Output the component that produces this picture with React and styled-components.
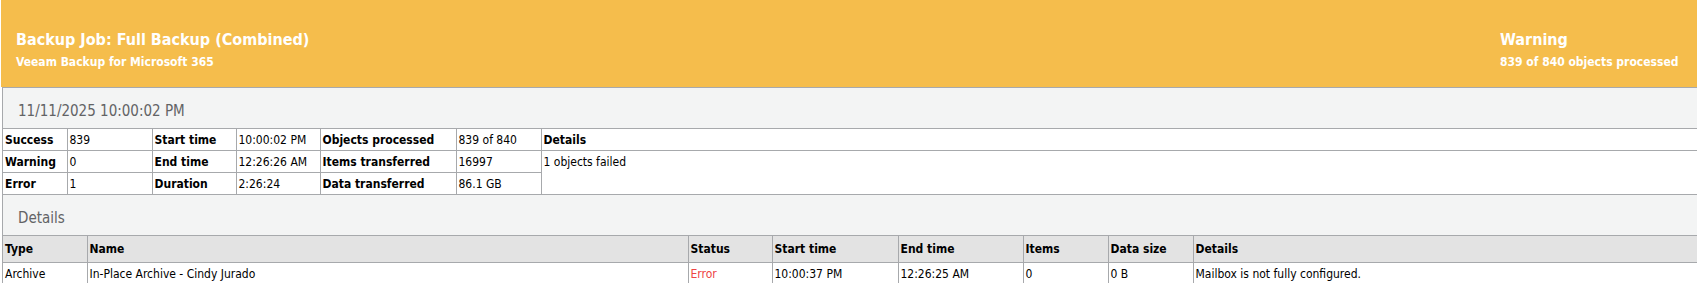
import React from "react";
import styled, { createGlobalStyle } from "styled-components";

const Global = createGlobalStyle`
  html, body { margin: 0; padding: 0; background: #ffffff; overflow: hidden; }
  body { font-family: "DejaVu Sans Condensed", "DejaVu Sans", Tahoma, sans-serif; font-size: 12px; color: #000; }
`;

const Report = styled.div`
  margin-left: 1px;
  margin-right: -4px;
`;

const Header = styled.header`
  display: grid;
  grid-template-columns: 1fr 201px;
  height: 87px;
  background: #f5bd4c;
  color: #ffffff;
  font-weight: bold;
  box-sizing: border-box;
  padding: 30px 0 0 15px;
`;

const HeaderBlock = styled.div`
  display: flex;
  flex-direction: column;
`;

const Title = styled.div`
  font-size: 16px;
  line-height: 19px;
  height: 25px;
`;

const Sub = styled.div`
  font-size: 12px;
  line-height: 15px;
`;

const Panel = styled.section`
  background: #f3f4f4;
  border-top: 1px solid #a7a9ac;
  border-left: 1px solid #a7a9ac;
  margin-left: 1px;
`;

const SectionTitle = styled.div`
  height: 40px;
  box-sizing: border-box;
  padding: ${(p) => p.$top}px 0 0 15px;
  font-size: 15px;
  line-height: 18px;
  color: #626365;
`;

const Table = styled.table`
  width: 100%;
  border-collapse: collapse;
  table-layout: fixed;
  background: #ffffff;
  border-top: 1px solid #a7a9ac;
`;

const Row = styled.tr`
  height: ${(p) => p.$h}px;
  background: ${(p) => (p.$head ? "#e3e3e3" : "#ffffff")};
`;

const Cell = styled.td`
  border: 1px solid #a7a9ac;
  border-left: ${(p) => (p.$first ? "none" : "1px solid #a7a9ac")};
  padding: 0 0 0 2px;
  font-size: 12px;
  line-height: 14px;
  vertical-align: ${(p) => (p.$top ? "top" : "middle")};
  padding-top: ${(p) => (p.$top ? "4px" : "0")};
  font-weight: ${(p) => (p.$bold ? "bold" : "normal")};
  color: ${(p) => (p.$error ? "#ee4444" : "#000000")};
  white-space: nowrap;
  overflow: hidden;
`;

const summaryCols = [64, 85, 84, 84, 136, 85, null];
const detailCols = [84, 601, 84, 126, 125, 85, 85, null];

const Cols = ({ widths }) => (
  <colgroup>
    {widths.map((w, i) => (
      <col key={i} style={w ? { width: w } : undefined} />
    ))}
  </colgroup>
);

export default function App() {
  return (
    <>
      <Global />
      <Report>
        <Header>
          <HeaderBlock>
            <Title>Backup Job: Full Backup (Combined)</Title>
            <Sub>Veeam Backup for Microsoft 365</Sub>
          </HeaderBlock>
          <HeaderBlock>
            <Title>Warning</Title>
            <Sub>839 of 840 objects processed</Sub>
          </HeaderBlock>
        </Header>
        <Panel>
          <SectionTitle $top={14}>11/11/2025 10:00:02 PM</SectionTitle>
          <Table>
            <Cols widths={summaryCols} />
            <tbody>
              <Row $h={22}>
                <Cell $first $bold>Success</Cell>
                <Cell>839</Cell>
                <Cell $bold>Start time</Cell>
                <Cell>10:00:02 PM</Cell>
                <Cell $bold>Objects processed</Cell>
                <Cell>839 of 840</Cell>
                <Cell $bold>Details</Cell>
              </Row>
              <Row $h={22}>
                <Cell $first $bold>Warning</Cell>
                <Cell>0</Cell>
                <Cell $bold>End time</Cell>
                <Cell>12:26:26 AM</Cell>
                <Cell $bold>Items transferred</Cell>
                <Cell>16997</Cell>
                <Cell rowSpan={2} $top>1 objects failed</Cell>
              </Row>
              <Row $h={22}>
                <Cell $first $bold>Error</Cell>
                <Cell>1</Cell>
                <Cell $bold>Duration</Cell>
                <Cell>2:26:24</Cell>
                <Cell $bold>Data transferred</Cell>
                <Cell>86.1 GB</Cell>
              </Row>
            </tbody>
          </Table>
          <SectionTitle $top={14}>Details</SectionTitle>
          <Table>
            <Cols widths={detailCols} />
            <tbody>
              <Row $h={27} $head>
                <Cell $first $bold>Type</Cell>
                <Cell $bold>Name</Cell>
                <Cell $bold>Status</Cell>
                <Cell $bold>Start time</Cell>
                <Cell $bold>End time</Cell>
                <Cell $bold>Items</Cell>
                <Cell $bold>Data size</Cell>
                <Cell $bold>Details</Cell>
              </Row>
              <Row $h={23}>
                <Cell $first>Archive</Cell>
                <Cell>In-Place Archive - Cindy Jurado</Cell>
                <Cell $error>Error</Cell>
                <Cell>10:00:37 PM</Cell>
                <Cell>12:26:25 AM</Cell>
                <Cell>0</Cell>
                <Cell>0 B</Cell>
                <Cell>Mailbox is not fully configured.</Cell>
              </Row>
            </tbody>
          </Table>
        </Panel>
      </Report>
    </>
  );
}
